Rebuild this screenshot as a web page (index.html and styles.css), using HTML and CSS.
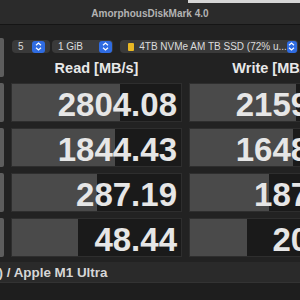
FILE: index.html
```html
<!DOCTYPE html>
<html lang="en">
<head>
    <meta charset="UTF-8">
    <meta name="viewport" content="width=device-width, initial-scale=1.0">
    <title>AmorphousDiskMark</title>
    <link rel="stylesheet" href="styles.css">
</head>
<body>
    <div class="titlebar">AmorphousDiskMark 4.0</div>

    <main class="panel">
        <div class="side-btn"></div>
        <div class="top">
            <div class="controls">
                <div class="select count">
                    <span class="label">5</span>
                    <span class="stepper"><svg width="7" height="9" viewBox="0 0 7 9"><path d="M1 3.2 L3.5 1 L6 3.2 M1 5.8 L3.5 8 L6 5.8" fill="none" stroke="#fff" stroke-width="1.2"/></svg></span>
                </div>
                <div class="select size">
                    <span class="label">1 GiB</span>
                    <span class="stepper"><svg width="7" height="9" viewBox="0 0 7 9"><path d="M1 3.2 L3.5 1 L6 3.2 M1 5.8 L3.5 8 L6 5.8" fill="none" stroke="#fff" stroke-width="1.2"/></svg></span>
                </div>
                <div class="select drive">
                    <span class="disk"></span>
                    <span class="label">4TB NVMe AM TB SSD (72% u...</span>
                    <span class="stepper"><svg width="7" height="9" viewBox="0 0 7 9"><path d="M1 3.2 L3.5 1 L6 3.2 M1 5.8 L3.5 8 L6 5.8" fill="none" stroke="#fff" stroke-width="1.2"/></svg></span>
                </div>
            </div>
            <div class="heads">
                <div class="head">Read [MB/s]</div>
                <div class="head">Write [MB/s]</div>
            </div>
        </div>

        <div class="side-btn"></div>
        <div class="cell"><div class="fill" style="width: 108px;"></div><span class="value">2804.08</span></div>
        <div class="cell"><div class="fill" style="width: 106px;"></div><span class="value">2159.77</span></div>

        <div class="side-btn"></div>
        <div class="cell"><div class="fill" style="width: 103px;"></div><span class="value">1844.43</span></div>
        <div class="cell"><div class="fill" style="width: 103px;"></div><span class="value">1648.59</span></div>

        <div class="side-btn"></div>
        <div class="cell"><div class="fill" style="width: 85px;"></div><span class="value">287.19</span></div>
        <div class="cell"><div class="fill" style="width: 79px;"></div><span class="value">187.36</span></div>

        <div class="side-btn"></div>
        <div class="cell"><div class="fill" style="width: 66px;"></div><span class="value">48.44</span></div>
        <div class="cell"><div class="fill" style="width: 57px;"></div><span class="value">20.61</span></div>
    </main>

    <footer class="status">
        <div class="cut"><span>SSD)</span></div>
        <span class="machine">&nbsp;/ Apple M1 Ultra</span>
    </footer>
</body>
</html>
```

FILE: styles.css
```css
html, body {
    margin: 0;
    height: 100%;
}

body {
    background: #1e1e1e;
    color: #e6e6e6;
    font-family: "Liberation Sans", Arial, sans-serif;
    overflow: hidden;
}

/* Window title */
.titlebar {
    height: 24px;
    line-height: 27px;
    text-align: center;
    font-size: 10px;
    font-weight: bold;
    color: #b3b3b3;
    background: linear-gradient(#d6d6d6, #d6d6d6) no-repeat right top / 112px 3px, #2b2b2b;
    border-bottom: 1px solid #151515;
}

/* Main grid: side buttons + read + write */
.panel {
    display: grid;
    grid-template-columns: 4px 171px 171px;
    grid-template-rows: repeat(5, 39px);
    column-gap: 7px;
    row-gap: 6px;
    padding-top: 13px;
    padding-bottom: 5px;
    background: #222;
    width: 400px;
}

.side-btn {
    background: #5d5d5d;
    border-radius: 0 2px 2px 0;
}

.top {
    grid-column: 2 / 4;
    display: flex;
    flex-direction: column;
}

.controls {
    display: flex;
    margin-top: 2px;
    margin-left: 1px;
    height: 15px;
}

.select {
    display: flex;
    align-items: center;
    background: #3a3a3a;
    border-radius: 4px;
    font-size: 10px;
    color: #dcdcdc;
    box-sizing: border-box;
}

.select .label {
    flex: 1;
    white-space: nowrap;
}

.count {
    width: 38px;
    padding: 0 5px 0 6px;
}

.size {
    width: 61px;
    margin-left: 2px;
    padding: 0 1px 0 6px;
}

.drive {
    width: 178px;
    margin-left: 7px;
    padding: 0 1px 0 8px;
}

.disk {
    width: 8px;
    height: 8px;
    background: #e9b824;
    border-radius: 1px;
    margin-right: 5px;
}

.stepper {
    width: 13px;
    height: 12px;
    border-radius: 3px;
    background: #2f6ce2;
    display: flex;
    align-items: center;
    justify-content: center;
}

.heads {
    display: grid;
    grid-template-columns: 171px 171px;
    column-gap: 7px;
    margin-top: 7px;
}

.head {
    text-align: center;
    font-size: 14.5px;
    font-weight: bold;
    color: #e8e8e8;
    line-height: 17px;
}

/* Result cells */
.cell {
    position: relative;
    display: flex;
    justify-content: flex-end;
    background: #1a1a1a;
    border: 1px solid #2e2e2e;
    overflow: hidden;
}

.fill {
    position: absolute;
    top: 0;
    bottom: 0;
    left: 0;
    background: #4a4a4a;
}

.value {
    position: relative;
    font-size: 33px;
    font-weight: bold;
    line-height: 37px;
    padding-top: 2px;
    padding-right: 4px;
    color: #e6e6e6;
}

/* Status line */
.status {
    display: flex;
    align-items: center;
    height: 20px;
    background: #2a2a2a;
    border-bottom: 1px solid #333;
    font-size: 13.4px;
    font-weight: bold;
    color: #d6d6d6;
    white-space: nowrap;
}

.cut {
    width: 3px;
    display: flex;
    justify-content: flex-end;
    overflow: hidden;
}

.cut span {
    flex: none;
}
```
